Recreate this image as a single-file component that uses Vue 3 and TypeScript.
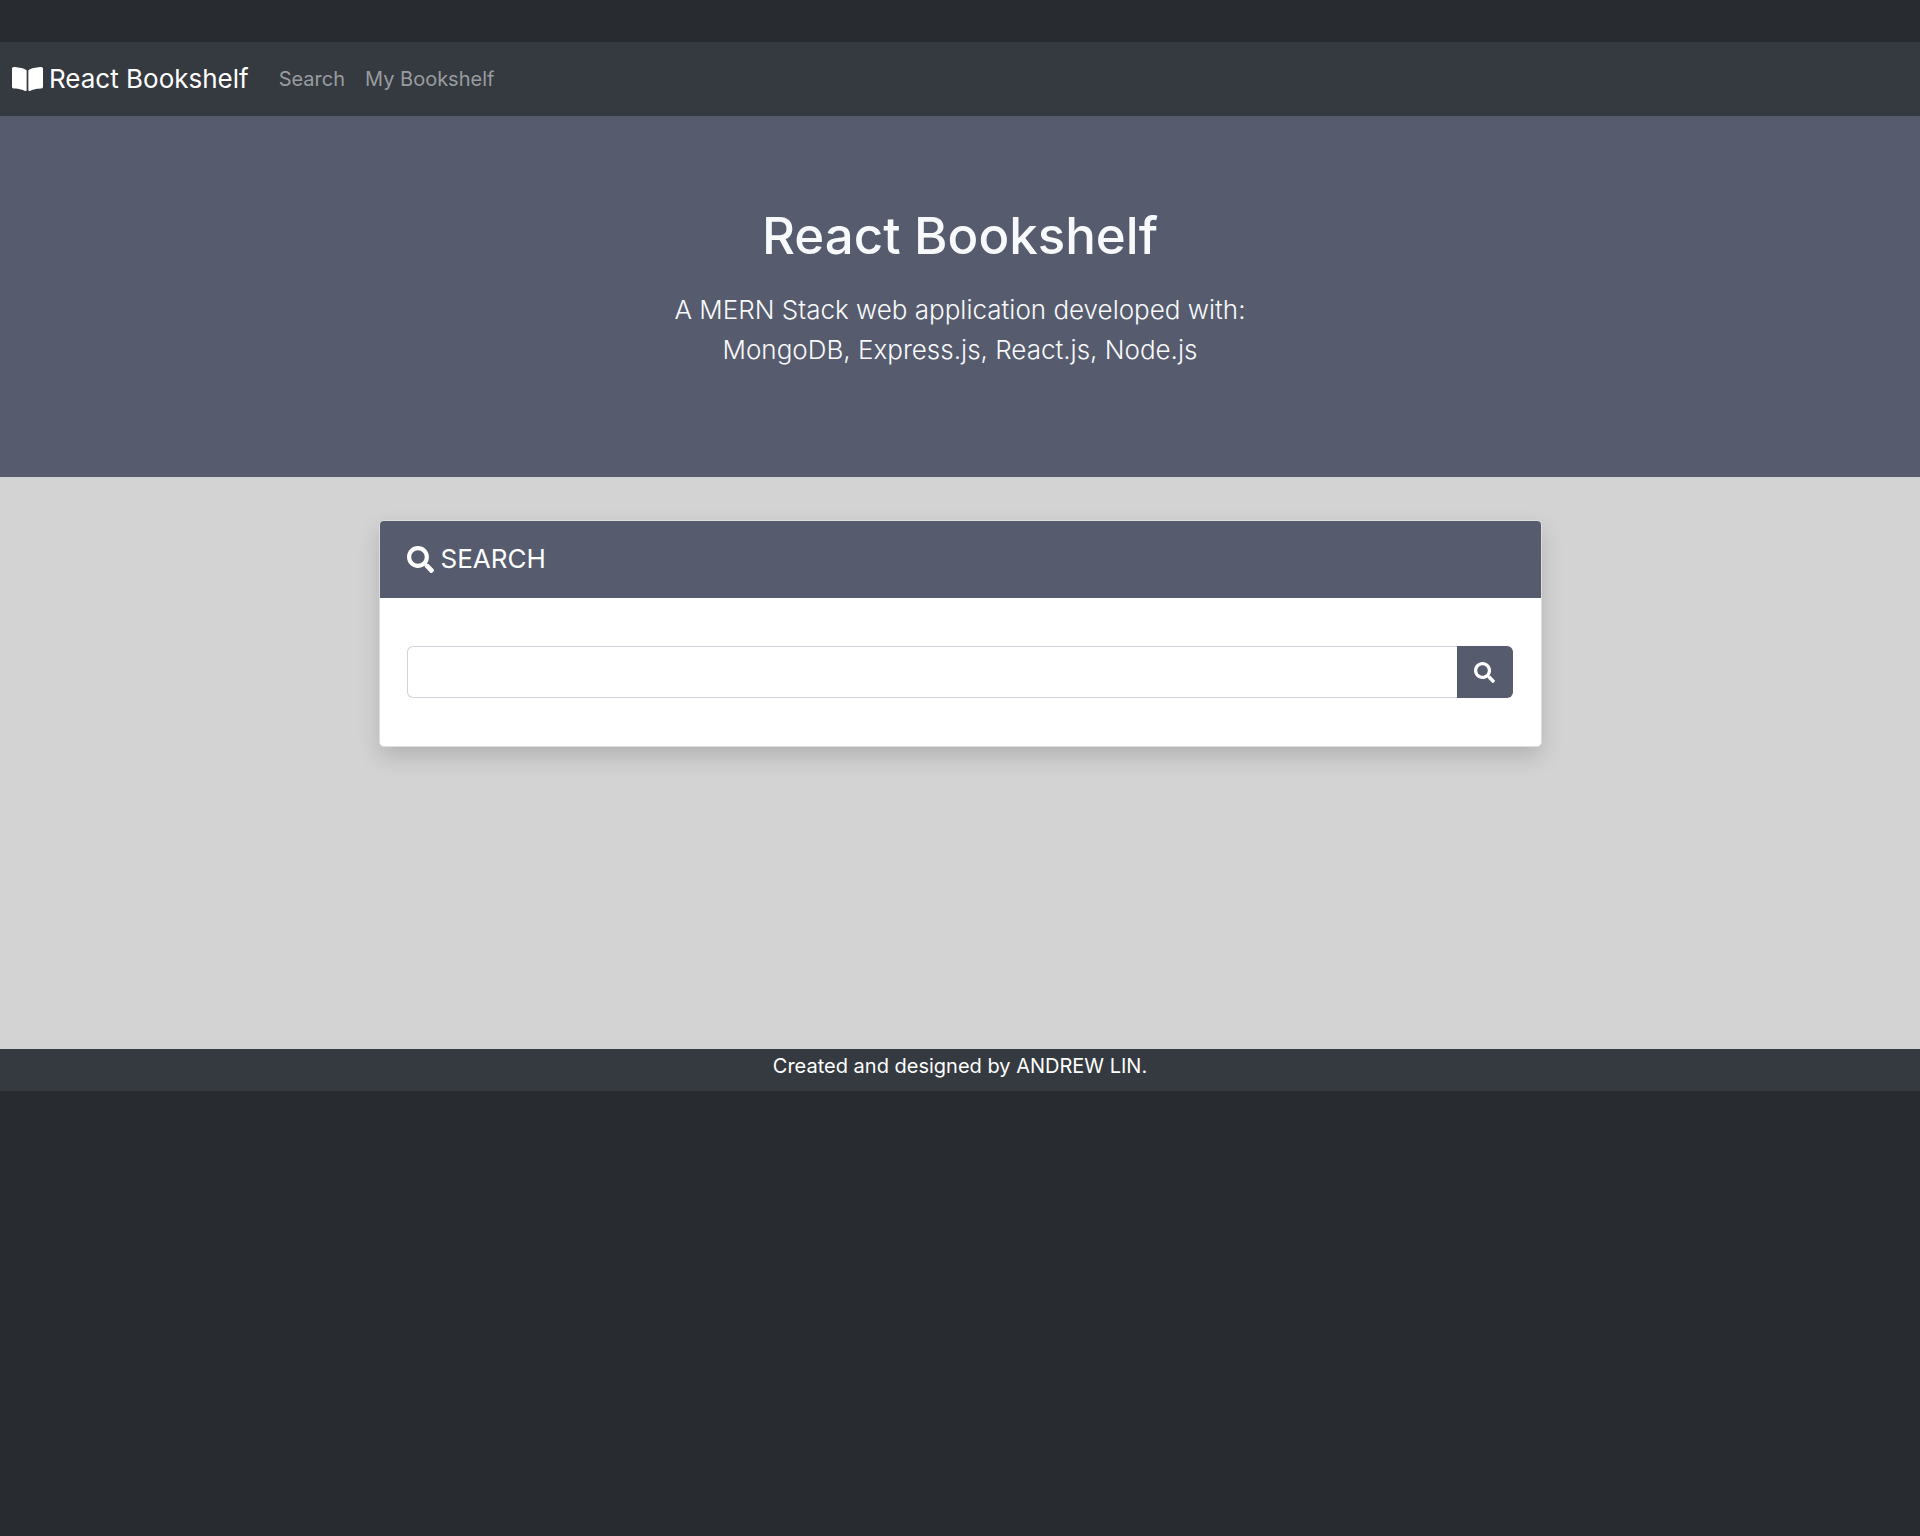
<script setup lang="ts">
import { ref } from 'vue'

interface NavLink {
  label: string
  href: string
}

const links: NavLink[] = [
  { label: 'Search', href: '#search' },
  { label: 'My Bookshelf', href: '#bookshelf' },
]

const query = ref<string>('')

const searchIcon: string =
  'M505 442.7L405.3 343c-4.5-4.5-10.6-7-17-7H372c27.6-35.3 44-79.7 44-128C416 93.1 322.9 0 208 0S0 93.1 0 208s93.1 208 208 208c48.3 0 92.7-16.4 128-44v16.3c0 6.4 2.5 12.5 7 17l99.7 99.7c9.4 9.4 24.6 9.4 33.9 0l28.3-28.3c9.4-9.4 9.4-24.6.1-34zM208 336c-70.7 0-128-57.2-128-128 0-70.7 57.2-128 128-128 70.7 0 128 57.2 128 128 0 70.7-57.2 128-128 128z'
const bookIcon: string =
  'M542.22 32.05c-54.8 3.11-163.72 14.43-230.96 55.59-4.64 2.84-7.27 7.89-7.27 13.17v363.87c0 11.55 12.63 18.85 23.28 13.49 69.18-34.82 169.23-44.32 218.7-46.92 16.89-.89 30.02-14.43 30.02-30.66V62.75c.01-17.71-15.35-31.74-33.77-30.7zM264.73 87.64C197.5 46.48 88.58 35.17 33.78 32.05 15.36 31.01 0 45.04 0 62.75V400.6c0 16.24 13.13 29.78 30.02 30.66 49.49 2.6 149.59 12.11 218.77 46.95 10.62 5.35 23.21-1.94 23.21-13.46V100.63c0-5.29-2.62-10.14-7.27-12.99z'
</script>

<template>
  <div class="page">
    <nav class="navbar">
      <a class="brand" href="#home">
        <svg class="book" viewBox="0 0 576 512" aria-hidden="true"><path :d="bookIcon" /></svg>
        <span>React Bookshelf</span>
      </a>
      <div class="links">
        <a v-for="link in links" :key="link.href" :href="link.href">{{ link.label }}</a>
      </div>
    </nav>

    <header class="hero">
      <h1>React Bookshelf</h1>
      <p>A MERN Stack web application developed with:<br />MongoDB, Express.js, React.js, Node.js</p>
    </header>

    <main class="content">
      <section class="card">
        <h2 class="card-header">
          <svg class="glass" viewBox="0 0 512 512" aria-hidden="true"><path :d="searchIcon" /></svg>
          <span>SEARCH</span>
        </h2>
        <form class="search" @submit.prevent>
          <input v-model="query" type="text" aria-label="Search books" />
          <button type="submit" aria-label="Search">
            <svg viewBox="0 0 512 512" aria-hidden="true"><path :d="searchIcon" /></svg>
          </button>
        </form>
      </section>
    </main>

    <footer class="footer">Created and designed by ANDREW LIN.</footer>
  </div>
</template>

<style>
body {
  background: #282c30;
}
</style>

<style scoped>
.page {
  padding-top: 42px;
  font-family: Inter, 'Liberation Sans', sans-serif;
  font-size: 20px;
  color: #fff;
}

.page * {
  box-sizing: border-box;
}

svg {
  display: block;
  flex: none;
  fill: currentColor;
}

a {
  text-decoration: none;
}

.navbar {
  display: flex;
  align-items: center;
  gap: 30px;
  padding: 17px 12px;
  background: #353a40;
}

.brand {
  display: flex;
  align-items: center;
  gap: 6px;
  color: #fff;
  font-size: 26px;
  line-height: 40px;
}

.book {
  width: 31px;
  height: 28px;
}

.links {
  display: flex;
  gap: 20px;
}

.links a {
  color: #999c9f;
  line-height: 40px;
}

.hero {
  padding: 88px 20px 107px;
  background: #565c6e;
  color: #f8f9fa;
  text-align: center;
}

h1 {
  margin: 0 0 22px;
  font-size: 51px;
  font-weight: 500;
  line-height: 64px;
}

.hero p {
  margin: 0;
  font-size: 26px;
  font-weight: 300;
  line-height: 40px;
}

.content {
  padding: 43px 20px 302px;
  background: #d3d3d3;
}

.card {
  max-width: 1163px;
  margin: 0 auto;
  border: 1px solid #dcdcdc;
  border-radius: 5px;
  background: #fff;
  box-shadow: 0 10px 22px rgba(0, 0, 0, 0.15);
}

.card-header {
  display: flex;
  align-items: center;
  gap: 7px;
  margin: 0;
  padding: 18px 27px 19px;
  border-radius: 4px 4px 0 0;
  background: #565c6e;
  font-size: 26px;
  font-weight: 400;
  line-height: 40px;
}

.glass {
  width: 27px;
  height: 27px;
}

.search {
  display: flex;
  padding: 48px 28px 48px 27px;
}

.search input {
  flex: 1;
  min-width: 0;
  height: 52px;
  padding: 8px 16px;
  border: 1px solid #ced4da;
  border-right: 0;
  border-radius: 6px 0 0 6px;
  outline: 0;
  background: #fff;
  color: #495057;
  font: inherit;
}

.search button {
  display: flex;
  align-items: center;
  justify-content: center;
  width: 56px;
  height: 52px;
  padding: 0;
  border: 0;
  border-radius: 0 6px 6px 0;
  background: #565c6e;
  color: #fff;
}

.search button svg {
  width: 21px;
  height: 21px;
}

.footer {
  padding-bottom: 8px;
  background: #353a40;
  line-height: 34px;
  text-align: center;
}
</style>
